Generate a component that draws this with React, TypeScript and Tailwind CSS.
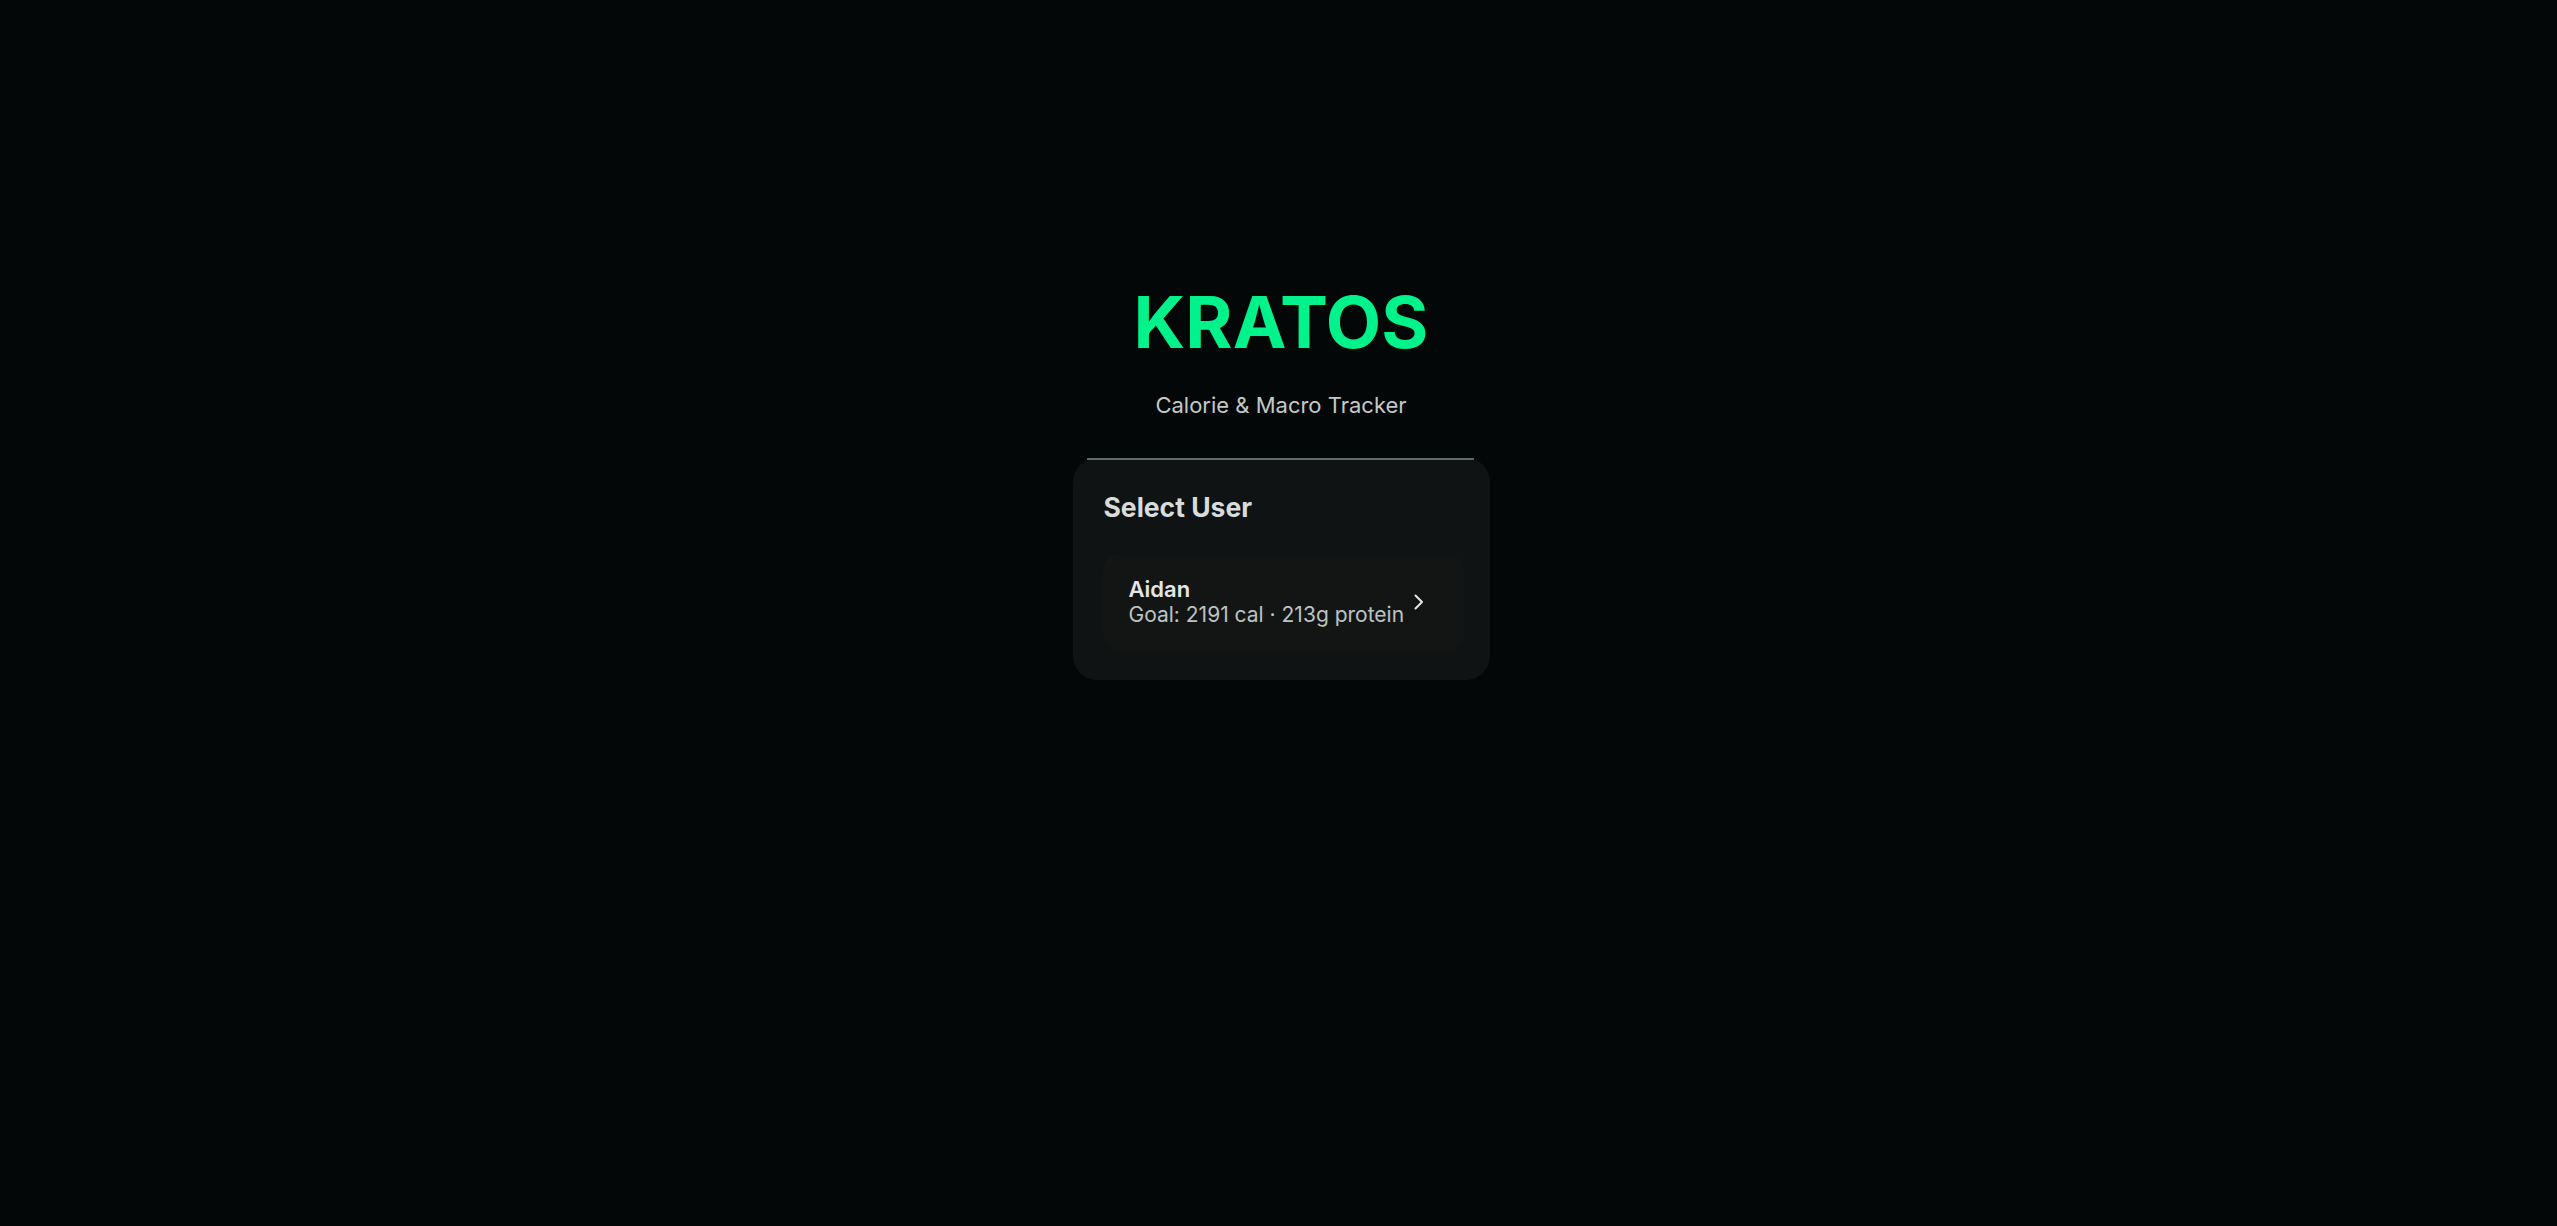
export default function App() {
  return (
    <div className="min-h-screen w-full bg-[#040707] font-['Inter',_'Liberation_Sans',_sans-serif] flex flex-col items-center pt-[286px] pl-[5px]">
      <h1 className="text-[72px] leading-[72px] font-bold text-[#00f38a]">KRATOS</h1>
      <p className="mt-[31px] text-[22px] leading-[32px] text-[#c3c9c7]">Calorie &amp; Macro Tracker</p>

      <div className="relative mt-[37px] w-[417px] rounded-[24px] bg-[#101313] pt-[32px] pl-[30px] pr-[26px] pb-[27px]">
        {/* thin highlight along the card's top edge */}
        <div className="absolute top-0 left-[14px] right-[16px] h-[2px] bg-[#5c6a68]" />
        <h2 className="pl-[1px] text-[26.5px] leading-[34px] font-bold text-[#d8dcda]">Select User</h2>

        <button className="mt-[29px] flex w-full items-center justify-between rounded-[18px] bg-[#131515] pl-[26px] pr-[40px] pt-[23px] pb-[25px] text-left">
          <div className="flex flex-col">
            <span className="text-[22px] leading-[26px] font-semibold text-[#e2e6e4]">Aidan</span>
            <span className="text-[21px] leading-[26px] text-[#bcc3c1]">Goal: 2191 cal · 213g protein</span>
          </div>
          <svg width="10" height="16" viewBox="0 0 10 16" fill="none" className="shrink-0">
            <path d="M1.5 1.5 L8 8 L1.5 14.5" stroke="#e5e7e6" strokeWidth="2" strokeLinecap="round" strokeLinejoin="round" />
          </svg>
        </button>
      </div>
    </div>
  );
}
